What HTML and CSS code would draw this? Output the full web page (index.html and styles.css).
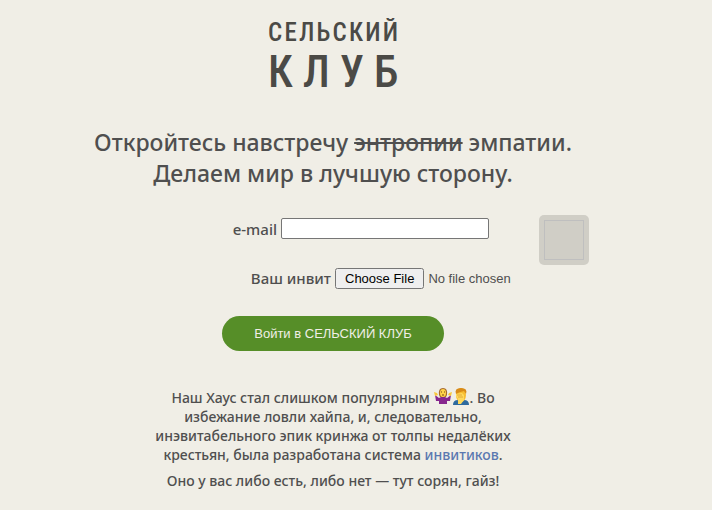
FILE: index.html
```html
<!DOCTYPE html>
<html lang="ru">
<head>
<meta charset="utf-8">
<meta name="viewport" content="width=device-width, initial-scale=1">
<title>Сельский клуб</title>
<link rel="stylesheet" href="styles.css">
</head>
<body>
<main class="page">
  <header class="logo" aria-label="Сельский клуб">
    <div class="logo-top"><span>С</span><span>Е</span><span>Л</span><span>Ь</span><span>С</span><span>К</span><span>И</span><span>Й</span></div>
    <div class="logo-bottom"><span>К</span><span>Л</span><span>У</span><span>Б</span></div>
  </header>
  <h1 class="slogan">Откройтесь навстречу <s>энтропии</s> эмпатии.<br>Делаем мир в лучшую сторону.</h1>
  <form class="entry">
    <div class="field field-email">
      <label for="email">e-mail</label>
      <input id="email" class="email" type="email">
    </div>
    <div class="drop"><div class="drop-frame"></div></div>
    <div class="field field-invite">
      <label for="invite">Ваш инвит</label>
      <input id="invite" class="file" type="file">
    </div>
    <button class="submit" type="submit">Войти в СЕЛЬСКИЙ КЛУБ</button>
  </form>
  <section class="note">
    <p>Наш Хаус стал слишком популярным
      <span class="emojis"><svg viewBox="0 0 18 18" aria-hidden="true"><path d="M5 8Q4 1 9 1Q14 1 13 8L12 10H6Z" fill="#a7682b"/><path d="M1 8L5 11L7 10H11L13 11L17 8L16 14L13 14V17H5V14L2 14Z" fill="#87278e"/><path d="M0 5L3 6L4 8L1 9ZM18 5L15 6L14 8L17 9Z" fill="#f8c83c"/><ellipse cx="9" cy="6" rx="3" ry="4" fill="#ffd348"/><path d="M7 5H8M10 5H11M8 8H10" stroke="#764719"/></svg><svg viewBox="0 0 18 18" aria-hidden="true"><path d="M1 18Q1 13 6 13H12Q17 13 17 18Z" fill="#2e6a9e"/><ellipse cx="9" cy="8" rx="5" ry="7" fill="#f7bd32"/><path d="M4 7Q2 1 9 1Q16 1 14 7L12 4Q7 5 4 7Z" fill="#d88b19"/><path d="M4 7L10 6L12 8V13L9 17H6V12L4 9Z" fill="#ffd95c"/><path d="M5 8H10M6 10H11" stroke="#e2aa38"/></svg></span>. Во<br>
      избежание ловли хайпа, и, следовательно,<br>
      инэвитабельного эпик кринжа от толпы недалёких<br>
      крестьян, была разработана система <a href="#">инвитиков</a>.</p>
    <p>Оно у вас либо есть, либо нет — тут сорян, гайз!</p>
  </section>
</main>
</body>
</html>
```
FILE: styles.css
```css
* {
  box-sizing: border-box;
}

body {
  margin: 0;
  background: #f0eee6;
  color: #4f4f4f;
  font-family: "Comic Sans MS", "Noto Sans", sans-serif;
}

.page {
  padding: 16px 46px 16px 0;
  text-align: center;
}

.logo {
  width: 130px;
  margin: 0 auto;
  color: #4b4a46;
}

.logo-top,
.logo-bottom {
  display: flex;
  justify-content: space-between;
}

.logo-top {
  font: 500 25px/34px "Roboto Condensed", Roboto, sans-serif;
}

.logo-bottom {
  font: 500 44px/44px "Roboto Condensed", Roboto, sans-serif;
}

.slogan {
  margin: 33px 0 26px;
  font-size: 23px;
  line-height: 31px;
  font-weight: 500;
}

.entry {
  display: grid;
  grid-template-columns: 1fr 356px 1fr;
  column-gap: 28px;
  font-size: 15px;
  font-weight: 500;
}

.field {
  grid-column: 2;
  display: flex;
  justify-content: flex-end;
  align-items: center;
  gap: 4px;
}

.field-email {
  padding-right: 22px;
  height: 27px;
}

.field-invite {
  height: 72px;
  margin-bottom: 2px;
}

.drop {
  grid-column: 3;
  grid-row: 1 / span 2;
  width: 50px;
  height: 50px;
  padding: 5px;
  border-radius: 5px;
  background: #d0cec6;
}

.drop-frame {
  height: 100%;
  border: 1px solid #bfbfbf;
}

.email {
  width: 208px;
  height: 21px;
  border: 1px solid #767676;
  border-radius: 2px;
  background: #fff;
}

.file {
  width: 176px;
  color: #4f4f4f;
  font: 13px "Liberation Sans", sans-serif;
}

.file::file-selector-button {
  padding: 1px 8px;
}

.submit {
  grid-column: 2;
  justify-self: center;
  height: 35px;
  padding: 0 32px;
  border: 0;
  border-radius: 18px;
  background: #568e28;
  color: #f0eee6;
  font: 13px "Liberation Sans", sans-serif;
}

.note {
  margin-top: 36px;
  font-size: 14px;
  line-height: 19px;
  font-weight: 500;
}

.note p {
  margin: 0 0 7px;
}

.note a {
  color: #5a78b0;
  text-decoration: none;
}

.emojis svg {
  width: 18px;
  height: 18px;
  vertical-align: -2px;
}
```
